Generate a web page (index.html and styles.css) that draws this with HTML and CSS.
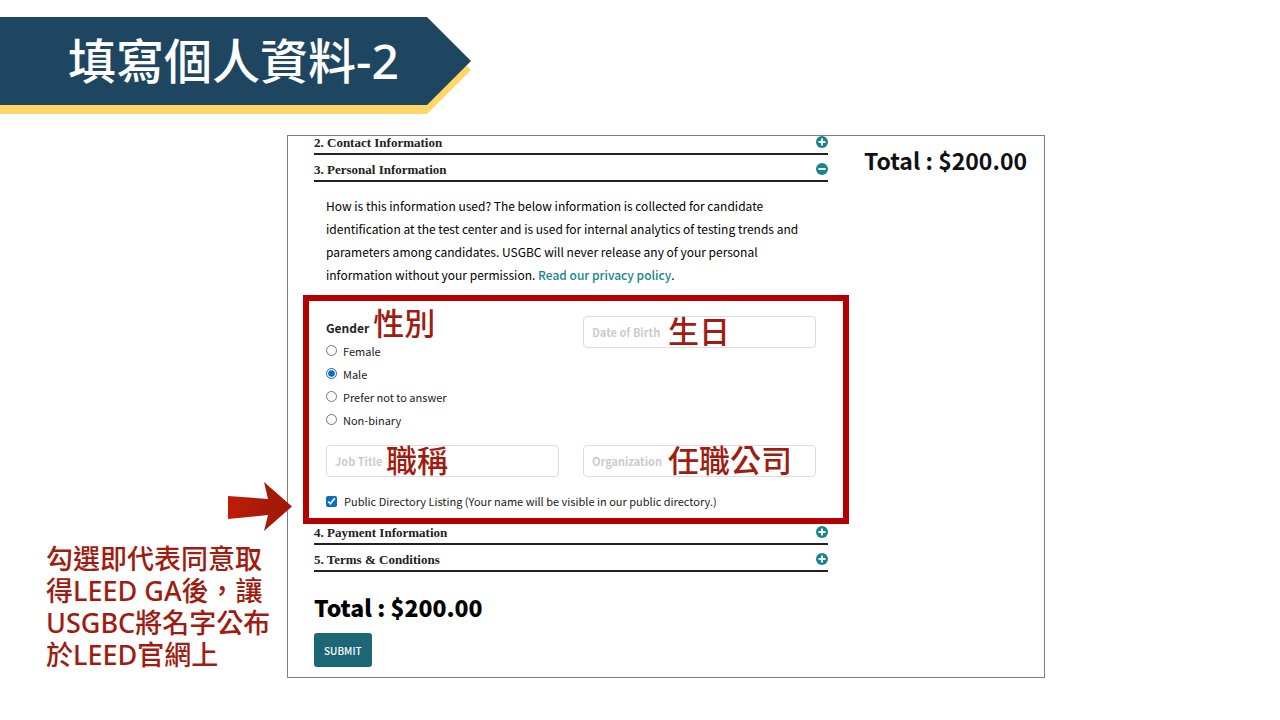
FILE: index.html
```html
<!DOCTYPE html>
<html lang="zh-Hant">
<head>
<meta charset="utf-8">
<meta name="viewport" content="width=device-width, initial-scale=1">
<title>填寫個人資料-2</title>
<link rel="stylesheet" href="styles.css">
</head>
<body>
<header class="banner">
  <h1 class="banner-title">填寫個人資料-2</h1>
</header>
<main class="slide">
  <aside class="note">
    <svg class="note-arrow" viewBox="0 0 64 49" width="64" height="49" aria-hidden="true">
      <defs>
        <linearGradient id="arrow-fill" x1="0" y1="0" x2="1" y2="0">
          <stop offset="0" stop-color="#c01c08"/>
          <stop offset=".55" stop-color="#a81a08"/>
          <stop offset="1" stop-color="#a01808"/>
        </linearGradient>
      </defs>
      <path d="M0 14L40 17L36 0L64 24.500L36 49L40 33L0 37Z" fill="url(#arrow-fill)"/>
    </svg>
    <p class="note-text">勾選即代表同意取得LEED GA後，讓USGBC將名字公布於LEED官網上</p>
  </aside>
  <form class="panel">
    <div class="accordion">
      <h2 class="step step-first">2. Contact Information
        <button class="toggle" type="button" aria-label="Expand Contact Information"><svg viewBox="0 0 12 12" width="12" height="12"><circle cx="6" cy="6" r="6"/><path d="M6 2.500V9.500M2.500 6H9.500"/></svg></button>
      </h2>
      <h2 class="step">3. Personal Information
        <button class="toggle" type="button" aria-label="Collapse Personal Information"><svg viewBox="0 0 12 12" width="12" height="12"><circle cx="6" cy="6" r="6"/><path d="M2.500 6H9.500"/></svg></button>
      </h2>
      <p class="intro">How is this information used? The below information is collected for candidate identification at the test center and is used for internal analytics of testing trends and parameters among candidates. USGBC will never release any of your personal information without your permission. <a class="link" href="#privacy">Read our privacy policy</a>.</p>
      <div class="details">
        <div class="gender" role="radiogroup" aria-labelledby="gender-label">
          <div class="gender-head"><span id="gender-label">Gender</span><span class="mark mark-label">性別</span></div>
          <label class="choice"><input class="tick" type="radio" name="gender">Female</label>
          <label class="choice"><input class="tick" type="radio" name="gender" checked>Male</label>
          <label class="choice"><input class="tick" type="radio" name="gender">Prefer not to answer</label>
          <label class="choice"><input class="tick" type="radio" name="gender">Non-binary</label>
        </div>
        <div class="field">
          <input class="text" type="text" placeholder="Date of Birth" aria-label="Date of Birth">
          <span class="mark mark-over">生日</span>
        </div>
        <div class="field">
          <input class="text" type="text" placeholder="Job Title" aria-label="Job Title">
          <span class="mark mark-over mark-near">職稱</span>
        </div>
        <div class="field">
          <input class="text" type="text" placeholder="Organization" aria-label="Organization">
          <span class="mark mark-over">任職公司</span>
        </div>
        <label class="choice listing"><input class="tick" type="checkbox" checked>Public Directory Listing (Your name will be visible in our public directory.)</label>
      </div>
      <h2 class="step">4. Payment Information
        <button class="toggle" type="button" aria-label="Expand Payment Information"><svg viewBox="0 0 12 12" width="12" height="12"><circle cx="6" cy="6" r="6"/><path d="M6 2.500V9.500M2.500 6H9.500"/></svg></button>
      </h2>
      <h2 class="step">5. Terms &amp; Conditions
        <button class="toggle" type="button" aria-label="Expand Terms and Conditions"><svg viewBox="0 0 12 12" width="12" height="12"><circle cx="6" cy="6" r="6"/><path d="M6 2.500V9.500M2.500 6H9.500"/></svg></button>
      </h2>
      <p class="total total-bottom">Total : $200.00</p>
      <button class="submit" type="button">SUBMIT</button>
    </div>
    <p class="total total-side">Total : $200.00</p>
  </form>
</main>
</body>
</html>
```

FILE: styles.css
```css
* {
  box-sizing: border-box;
}

body {
  margin: 0;
  padding: 17px 0 40px;
  background: #fff;
  color: #222;
  font-family: "Noto Sans CJK TC", sans-serif;
  font-size: 12px;
}

h1, h2, p {
  margin: 0;
}

.banner {
  position: relative;
  width: 471px;
  max-width: 100%;
  height: 97px;
  margin-bottom: 21px;
}

/* yellow edge under the arrow-shaped title */
.banner::before {
  content: "";
  position: absolute;
  inset: 9px 0 0;
  background: #fed766;
  clip-path: polygon(0 0, calc(100% - 44px) 0, 100% 50%, calc(100% - 44px) 100%, 0 100%);
}

.banner-title {
  position: relative;
  height: 88px;
  padding-left: 68px;
  background: #1f4660;
  clip-path: polygon(0 0, calc(100% - 44px) 0, 100% 50%, calc(100% - 44px) 100%, 0 100%);
  color: #fff;
  font-family: "Noto Sans", "Noto Sans CJK TC", sans-serif;
  font-size: 48px;
  font-weight: 500;
  line-height: 88px;
  white-space: nowrap;
}

.slide {
  display: grid;
  grid-template-columns: 241px minmax(0, 1fr);
  padding: 0 235px 0 46px;
}

.note {
  position: relative;
  align-self: end;
  padding-bottom: 7px;
}

.note-arrow {
  position: absolute;
  left: 182px;
  bottom: 100%;
  margin-bottom: 12px;
  z-index: 1;
}

.note-text {
  max-width: 230px;
  color: #a01c10;
  font-family: "Noto Sans", "Noto Sans CJK TC", sans-serif;
  font-size: 27px;
  font-weight: 500;
  line-height: 32px;
}

.panel {
  display: grid;
  grid-template-columns: minmax(0, 1fr) 180px;
  column-gap: 36px;
  padding: 0 0 10px 26px;
  border: 1px solid #7f7f7f;
  overflow: hidden;
}

.step {
  display: flex;
  align-items: center;
  justify-content: space-between;
  height: 27px;
  padding-top: 5px;
  border-bottom: 2px solid #222;
  color: #222;
  font-family: "Liberation Serif", serif;
  font-size: 13px;
  font-weight: 700;
  line-height: 20px;
}

.step-first {
  margin-top: -8px;
}

.toggle {
  width: 12px;
  height: 12px;
  margin-bottom: 2px;
  padding: 0;
  border: 0;
  background: none;
}

.toggle svg {
  display: block;
}

.toggle circle {
  fill: #17858c;
}

.toggle path {
  stroke: #fff;
  stroke-width: 2;
}

.intro {
  max-width: 496px;
  padding: 12px 0 9px 12px;
  font-size: 12px;
  font-weight: 400;
  line-height: 23px;
  color: #000;
}

.link {
  color: #17858c;
  font-weight: 500;
  text-decoration: none;
}

.details {
  display: grid;
  grid-template-columns: 1fr 1fr;
  column-gap: 24px;
  margin: 0 -21px -6px -11px;
  padding: 15px 27px 5px 17px;
  border: 6px solid #b40000;
}

.gender {
  padding-bottom: 14px;
}

.gender-head {
  display: flex;
  align-items: center;
  gap: 4px;
  height: 23px;
  font-weight: 700;
}

.choice {
  display: flex;
  align-items: center;
  gap: 6px;
  height: 23px;
  font-size: 11px;
}

.tick {
  width: 11px;
  height: 11px;
  margin: 0;
  accent-color: #0b6bcb;
}

.listing {
  grid-column: 1 / -1;
  gap: 7px;
  height: 24px;
  margin-top: 12px;
}

.field {
  position: relative;
}

.text {
  display: block;
  width: 100%;
  height: 32px;
  padding: 0 8px;
  border: 1px solid #ddd;
  border-radius: 4px;
  background: #fff;
  color: #222;
  font-family: inherit;
  font-size: 11px;
  font-weight: 700;
}

.text::placeholder {
  color: #ccc;
  opacity: 1;
}

.mark {
  color: #a01c10;
  font-size: 31px;
  font-weight: 500;
  line-height: 32px;
  white-space: nowrap;
}

.mark-label {
  margin-bottom: 12px;
}

.mark-over {
  position: absolute;
  top: -2px;
  left: 85px;
  pointer-events: none;
}

.mark-near {
  left: 60px;
}

.total {
  color: #111;
  font-size: 23px;
  font-weight: 700;
  line-height: 32px;
}

.total-side {
  margin-top: 8px;
}

.total-bottom {
  margin-top: 19px;
  color: #000;
  font-weight: 900;
}

.submit {
  display: block;
  height: 34px;
  margin-top: 10px;
  padding: 0 10px;
  border: 0;
  border-radius: 3px;
  background: #1d6676;
  color: #fff;
  font-family: inherit;
  font-size: 10px;
  font-weight: 500;
}
```
